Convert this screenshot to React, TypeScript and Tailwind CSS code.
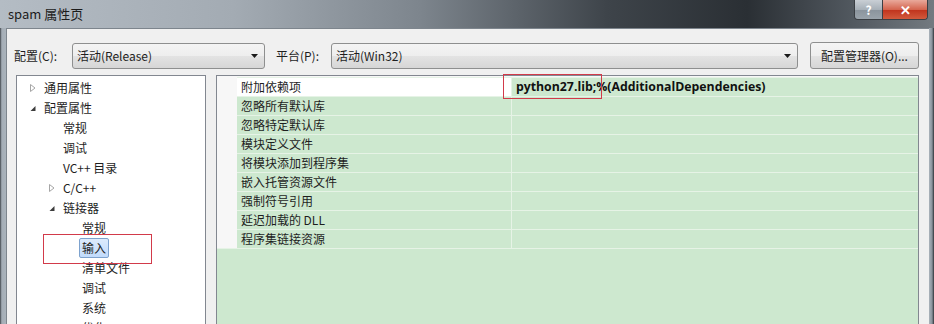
import React from "react";

const font = { fontFamily: '"Noto Sans CJK SC", "Noto Sans", sans-serif' };

const treeItems: { label: string; level: number; arrow?: "open" | "closed"; selected?: boolean }[] = [
    { label: "通用属性", level: 0, arrow: "closed" },
    { label: "配置属性", level: 0, arrow: "open" },
    { label: "常规", level: 1 },
    { label: "调试", level: 1 },
    { label: "VC++ 目录", level: 1 },
    { label: "C/C++", level: 1, arrow: "closed" },
    { label: "链接器", level: 1, arrow: "open" },
    { label: "常规", level: 2 },
    { label: "输入", level: 2, selected: true },
    { label: "清单文件", level: 2 },
    { label: "调试", level: 2 },
    { label: "系统", level: 2 },
    { label: "优化", level: 2 },
];

const gridRows = [
    "附加依赖项",
    "忽略所有默认库",
    "忽略特定默认库",
    "模块定义文件",
    "将模块添加到程序集",
    "嵌入托管资源文件",
    "强制符号引用",
    "延迟加载的 DLL",
    "程序集链接资源",
];

const Arrow = ({ type }: { type: "open" | "closed" }) =>
    type === "closed" ? (
        <svg width="8" height="10" viewBox="0 0 8 10">
            <path d="M1.5 1.5 L6 5 L1.5 8.5 Z" fill="none" stroke="#a6a6a6" strokeWidth="1" />
        </svg>
    ) : (
        <svg width="8" height="10" viewBox="0 0 8 10">
            <path d="M6.5 3 L6.5 8 L1.5 8 Z" fill="#3c3c3c" />
        </svg>
    );

const Select = ({ value, width }: { value: string; width: string }) => (
    <div className={`${width} h-[26px] flex items-center justify-between rounded-[3px] border border-[#8e8f8f] bg-[linear-gradient(#f4f4f4,#eeeeee_50%,#e3e3e3_51%,#d6d6d6)] pl-[4px] pr-[6px] text-[12px] text-[#1e1e1e]`}>
        <span>{value}</span>
        <svg width="7" height="4" viewBox="0 0 7 4">
            <path d="M0 0 L7 0 L3.5 4 Z" fill="#1a1a1a" />
        </svg>
    </div>
);

export default function App() {
    return (
        <div style={font} className="w-[934px] h-[324px] overflow-hidden flex flex-col bg-[#8f99a3]">
            {/* title bar */}
            <div className="h-[28px] shrink-0 flex items-start bg-[linear-gradient(to_right,#b4bcc4_0%,#a3abb3_25%,#7d858d_45%,#3e444a_65%,#2a2f34_80%,#545b62_92%,#737a80_100%)]">
                <span className="pl-[8px] pt-[4px] text-[13px] text-[#1c1c1c]">spam 属性页</span>
                <div className="ml-auto mr-[6px] flex h-[20px] rounded-b-[4px] border border-t-0 border-[#3b3f44] overflow-hidden">
                    <div className="w-[28px] flex items-center justify-center bg-[linear-gradient(#c9cfd5,#a7b0b8_50%,#8a939c_51%,#9aa3ab)] text-[12px] font-bold text-white border-r border-[#3b3f44]">?</div>
                    <div className="w-[44px] flex items-center justify-center bg-[linear-gradient(#e9a99b,#d4654f_50%,#c0321c_51%,#d25a3c)] text-[13px] font-bold text-white">✕</div>
                </div>
            </div>

            <div className="flex-1 flex">
                <div className="w-[7px] bg-[linear-gradient(to_right,#3f454b,#a4adb6_30%,#aab3bb)]" />
                <div className="flex-1 flex flex-col bg-[#f0f0f0] border-l border-t border-[#7d858d] pt-[13px] pl-[7px] pr-[10px]">
                    {/* config row */}
                    <div className="flex items-center h-[27px] text-[12px] text-[#1e1e1e]">
                        <span className="w-[58px]">配置(C):</span>
                        <Select value="活动(Release)" width="w-[193px]" />
                        <span className="ml-[11px] w-[55px]">平台(P):</span>
                        <Select value="活动(Win32)" width="w-[467px]" />
                        <div className="ml-[12px] w-[109px] h-[27px] flex items-center justify-center rounded-[3px] border border-[#8e8f8f] bg-[linear-gradient(#f4f4f4,#eeeeee_50%,#e3e3e3_51%,#d6d6d6)]">
                            配置管理器(O)...
                        </div>
                    </div>

                    {/* panels */}
                    <div className="flex-1 flex gap-[10px] mt-[6px] pl-[2px]">
                        {/* tree */}
                        <div className="relative w-[190px] bg-white border border-[#828790] pt-[2px] text-[12px] text-[#1e1e1e]">
                            {treeItems.map((item, i) => (
                                <div key={i} className="h-[20px] flex items-center" style={{ paddingLeft: 12 + item.level * 19 }}>
                                    <span className="w-[15px] flex items-center">{item.arrow && <Arrow type={item.arrow} />}</span>
                                    <span className={item.selected ? "px-[2px] -ml-[3px] rounded-[2px] border border-[#7da2ce] bg-[linear-gradient(#dcebfc,#c1dbfc)]" : ""}>
                                        {item.label}
                                    </span>
                                </div>
                            ))}
                            <div className="absolute left-[26px] top-[158px] w-[109px] h-[30px] border border-[#d23a4a]" />
                        </div>

                        {/* property grid */}
                        <div className="relative flex-1 flex flex-col border border-[#828790] bg-[#cde8cf]">
                            <div className="bg-[#f7f7f7] pt-[1px]">
                                {gridRows.map((row, i) => (
                                    <div key={i} className="h-[19px] flex text-[12px] text-[#1e1e1e]">
                                        <div className="w-[20px] bg-[#f7f7f7]" />
                                        <div className={`w-[274px] flex items-center pl-[4px] border-t border-[#e6f3e6] ${i === 0 ? "bg-white" : "bg-[#cde8cf]"}`}>
                                            {row}
                                        </div>
                                        <div className="flex-1 flex items-center pl-[4px] border-t border-l border-[#e6f3e6] bg-[#cde8cf]">
                                            {i === 0 && (
                                                <span style={{ fontFamily: '"Open Sans", sans-serif' }} className="text-[12.3px] font-bold text-[#111]">
                                                    python27.lib;%(AdditionalDependencies)
                                                </span>
                                            )}
                                        </div>
                                    </div>
                                ))}
                                <div className="h-[1px] bg-[#e6f3e6]" />
                            </div>
                            <div className="flex-1 bg-[#cde8cf]" />
                            <div className="absolute left-[286px] top-[-2px] w-[99px] h-[25px] border border-[#d23a4a]" />
                        </div>
                    </div>
                </div>
                <div className="w-[6px] bg-[linear-gradient(to_right,#aab3bb,#8a939c_60%,#2e3338)]" />
            </div>
        </div>
    );
}
